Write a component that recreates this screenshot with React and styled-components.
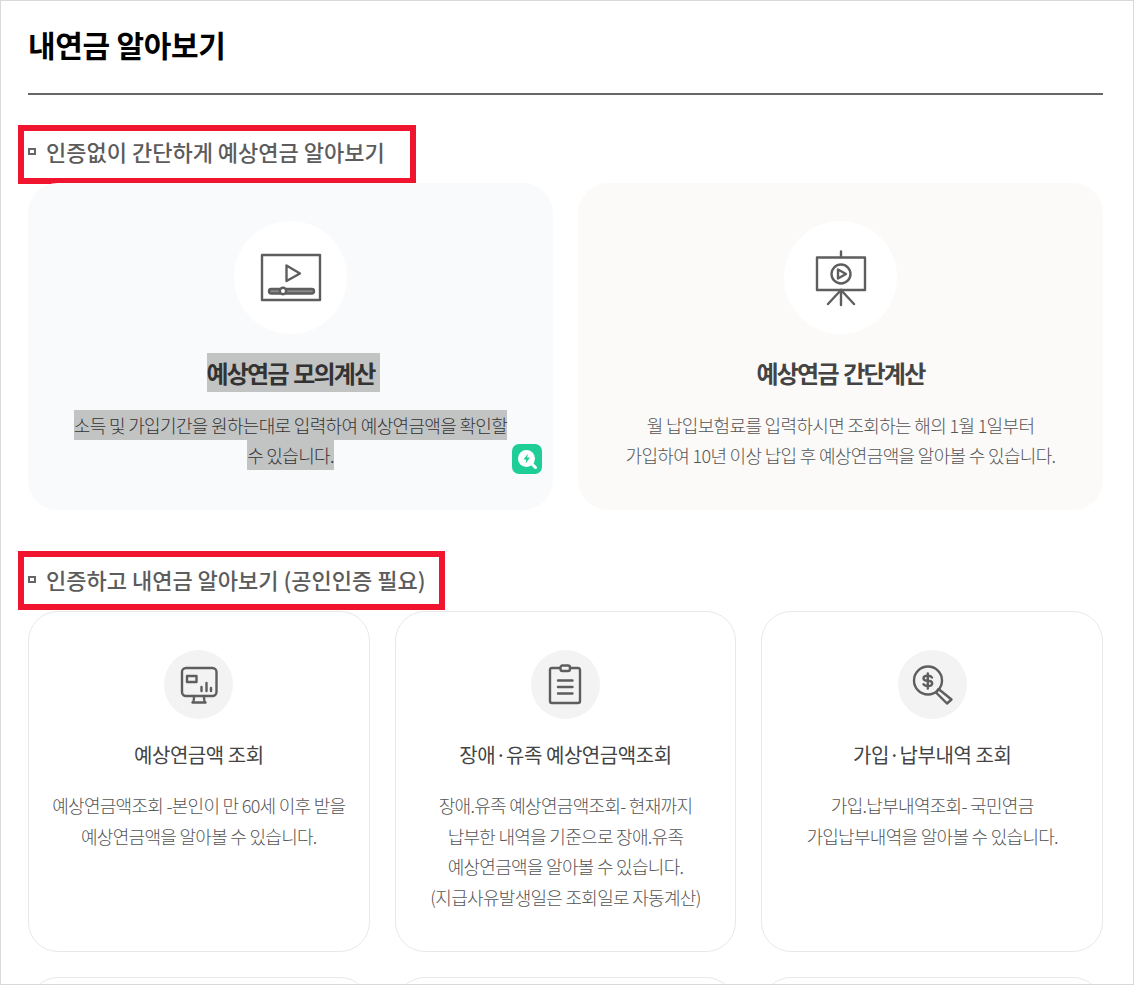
import React from "react";
import styled, { createGlobalStyle } from "styled-components";

const Global = createGlobalStyle`
  html, body { margin: 0; padding: 0; background: #fff; }
  * { box-sizing: border-box; }
`;

const Frame = styled.div`
  width: 1134px;
  height: 985px;
  overflow: hidden;
  border: 1px solid #d9d9d9;
  padding: 0 30px 0 27px;
  background: #fff;
  font-family: "Noto Sans CJK KR", "Noto Sans", sans-serif;
`;

const PageTitle = styled.h1`
  margin: 0;
  height: 94px;
  padding-top: 21px;
  border-bottom: 2px solid #666;
  font-size: 30px;
  line-height: 45px;
  font-weight: 700;
  letter-spacing: -0.3px;
  color: #000;
`;

const SectionHead = styled.h2`
  position: relative;
  display: flex;
  align-items: center;
  margin: 0;
  font-size: 22px;
  font-weight: 500;
  line-height: 32px;
  color: #5c5c5c;
`;

const FirstHead = styled(SectionHead)`
  padding-top: 40px;
  padding-bottom: 16px;
`;

const SecondHead = styled(SectionHead)`
  padding-top: 53px;
  padding-bottom: 16px;
`;

const Bullet = styled.span`
  width: 8px;
  height: 7px;
  margin-right: 10px;
  border: 2px solid #666;
  flex: none;
`;

const RedBox = styled.span`
  position: absolute;
  left: -10px;
  bottom: ${(p) => p.$bottom}px;
  width: ${(p) => p.$w}px;
  height: 59px;
  border: 6px solid #f0142f;
`;

const FeatureRow = styled.div`
  display: grid;
  grid-template-columns: 1fr 1fr;
  gap: 25px;
`;

const FeatureCard = styled.div`
  position: relative;
  height: 327px;
  padding-top: 38px;
  border-radius: 30px;
  background: ${(p) => p.$bg};
  display: flex;
  flex-direction: column;
  align-items: center;
  text-align: center;
`;

const BigCircle = styled.div`
  width: 113px;
  height: 113px;
  border-radius: 50%;
  background: #fff;
  display: flex;
  align-items: center;
  justify-content: center;
  flex: none;
`;

const FeatureTitle = styled.h3`
  margin: 19px 0 0;
  font-size: 24px;
  line-height: 39px;
  height: 39px;
  font-weight: 700;
  letter-spacing: -1.8px;
  word-spacing: 2px;
  color: #444;
`;

const SelectedTitle = styled.span`
  display: inline-block;
  height: 39px;
  padding-right: 6px;
  margin-right: -6px;
  background: #c2c3c3;
  color: #333;
`;

const FeatureText = styled.p`
  margin: 18px 0 0;
  width: 450px;
  font-size: 18px;
  line-height: 30px;
  font-weight: 300;
  letter-spacing: -0.66px;
  color: #555;
`;

const Selected = styled.span`
  background: #c2c3c3;
  color: #333;
  padding: 2px 0;
`;

const Badge = styled.div`
  position: absolute;
  right: 11px;
  top: 261px;
  width: 30px;
  height: 30px;
  border-radius: 7px;
  background: #1fce97;
  display: flex;
  align-items: center;
  justify-content: center;
`;

const CardGrid = styled.div`
  display: grid;
  grid-template-columns: repeat(3, 1fr);
  grid-auto-rows: 341px;
  gap: 25px;
`;

const InfoCard = styled.div`
  border: 1px solid #e8e8e8;
  border-radius: 30px;
  padding-top: 38px;
  display: flex;
  flex-direction: column;
  align-items: center;
  text-align: center;
`;

const SmallCircle = styled.div`
  width: 69px;
  height: 69px;
  border-radius: 50%;
  background: #f3f3f3;
  display: flex;
  align-items: center;
  justify-content: center;
  flex: none;
`;

const InfoTitle = styled.h4`
  margin: 20px 0 0;
  font-size: 20px;
  line-height: 32px;
  font-weight: 400;
  letter-spacing: -0.45px;
  color: #444;
`;

const InfoText = styled.p`
  margin: 19px 0 0;
  font-size: 18px;
  line-height: 30.6px;
  font-weight: 300;
  letter-spacing: -0.7px;
  color: #555;
`;

const Line = styled.span`
  display: block;
`;

const IconStroke = styled.svg`
  fill: none;
  stroke: #5e5e5e;
  stroke-width: 2.4;
  stroke-linecap: round;
  stroke-linejoin: round;
  flex: none;
`;

const VideoIcon = () => (
  <IconStroke width="64" height="64" viewBox="0 0 64 64">
    <rect x="3" y="9" width="58" height="45" />
    <path d="M27.500 19.500 L41 27.500 L27.500 35 Z" />
    <rect x="10" y="43" width="45" height="4.500" rx="2.250" fill="#8a8a8a" />
    <circle cx="24" cy="45" r="3.200" fill="#fff" />
  </IconStroke>
);

const BoardIcon = () => (
  <IconStroke width="64" height="64" viewBox="0 0 64 64">
    <rect x="8" y="11.500" width="48" height="32.500" />
    <path d="M32 5.500 V11 M32 44 V59 M32 44 L19 58 M32 44 L45 58" />
    <circle cx="32" cy="28" r="9.500" />
    <path d="M29 23.500 L37 28 L29 32.500 Z" />
  </IconStroke>
);

const MonitorIcon = () => (
  <IconStroke width="44" height="44" viewBox="0 0 44 44">
    <rect x="5" y="5" width="34.500" height="28" rx="4" />
    <rect x="10" y="13" width="9.500" height="6" />
    <path d="M24.500 28 V24 M29.500 28 V20 M34 28 V25" />
    <path d="M17 33 Q17 39 15.500 39.500 H28.500 Q27 39 27 33" />
  </IconStroke>
);

const ClipboardIcon = () => (
  <IconStroke width="44" height="44" viewBox="0 0 44 44">
    <path d="M17 5 H9 Q7 5 7 7 V38 Q7 40 9 40 H35 Q37 40 37 38 V7 Q37 5 35 5 H27" />
    <rect x="17.500" y="2.500" width="9.500" height="5.500" rx="2" />
    <path d="M15 17.500 H29.500 M15 24 H29.500 M15 30.500 H29.500" />
  </IconStroke>
);

const MoneyIcon = () => (
  <IconStroke width="44" height="44" viewBox="0 0 44 44">
    <circle cx="18" cy="17.500" r="14" />
    <path d="M22 14.500 Q21 12.800 17.800 12.800 Q13.500 12.800 13.500 15.300 Q13.500 17.700 17.800 17.800 Q22.200 18 22.200 20.500 Q22.200 23 17.800 23 Q14.500 23 13.500 21.200 M17.800 10.500 V25.500" />
    <path d="M28.500 26 L41.500 36.500 L37 40.500 L26 29.500 Z" />
  </IconStroke>
);

const BadgeIcon = () => (
  <svg width="22" height="22" viewBox="0 0 22 22">
    <circle cx="10.500" cy="10.500" r="8.500" fill="#fff" />
    <path d="M16 16 L19.500 19.500" stroke="#fff" strokeWidth="3" strokeLinecap="round" />
    <path d="M12 5.500 L7.500 11.500 H10.300 L9.500 15.500 L14 9.500 H11 Z" fill="#1fce97" />
  </svg>
);

const infoCards = [
  {
    icon: <MonitorIcon />,
    title: "예상연금액 조회",
    lines: ["예상연금액조회 -본인이 만 60세 이후 받을", "예상연금액을 알아볼 수 있습니다."],
  },
  {
    icon: <ClipboardIcon />,
    title: "장애·유족 예상연금액조회",
    lines: [
      "장애.유족 예상연금액조회- 현재까지",
      "납부한 내역을 기준으로 장애.유족",
      "예상연금액을 알아볼 수 있습니다.",
      "(지급사유발생일은 조회일로 자동계산)",
    ],
  },
  {
    icon: <MoneyIcon />,
    title: "가입·납부내역 조회",
    lines: ["가입.납부내역조회- 국민연금", "가입납부내역을 알아볼 수 있습니다."],
  },
  { icon: null, title: "", lines: [] },
  { icon: null, title: "", lines: [] },
  { icon: null, title: "", lines: [] },
];

export default function App() {
  return (
    <Frame>
      <Global />
      <PageTitle>내연금 알아보기</PageTitle>

      <FirstHead>
        <Bullet />
        인증없이 간단하게 예상연금 알아보기
        <RedBox $bottom={-1} $w={398} />
      </FirstHead>

      <FeatureRow>
        <FeatureCard $bg="#f9fafc">
          <BigCircle>
            <VideoIcon />
          </BigCircle>
          <FeatureTitle>
            <SelectedTitle>예상연금 모의계산</SelectedTitle>
          </FeatureTitle>
          <FeatureText>
            <Selected>소득 및 가입기간을 원하는대로 입력하여 예상연금액을 확인할 수 있습니다.</Selected>
          </FeatureText>
          <Badge>
            <BadgeIcon />
          </Badge>
        </FeatureCard>
        <FeatureCard $bg="#fbfaf8">
          <BigCircle>
            <BoardIcon />
          </BigCircle>
          <FeatureTitle>예상연금 간단계산</FeatureTitle>
          <FeatureText>
            <Line>월 납입보험료를 입력하시면 조회하는 해의 1월 1일부터</Line>
            <Line>가입하여 10년 이상 납입 후 예상연금액을 알아볼 수 있습니다.</Line>
          </FeatureText>
        </FeatureCard>
      </FeatureRow>

      <SecondHead>
        <Bullet />
        인증하고 내연금 알아보기 (공인인증 필요)
        <RedBox $bottom={1} $w={427} />
      </SecondHead>

      <CardGrid>
        {infoCards.map((card, i) => (
          <InfoCard key={i}>
            {card.icon && <SmallCircle>{card.icon}</SmallCircle>}
            {card.title && <InfoTitle>{card.title}</InfoTitle>}
            {card.lines.length > 0 && (
              <InfoText>
                {card.lines.map((l) => (
                  <Line key={l}>{l}</Line>
                ))}
              </InfoText>
            )}
          </InfoCard>
        ))}
      </CardGrid>
    </Frame>
  );
}
